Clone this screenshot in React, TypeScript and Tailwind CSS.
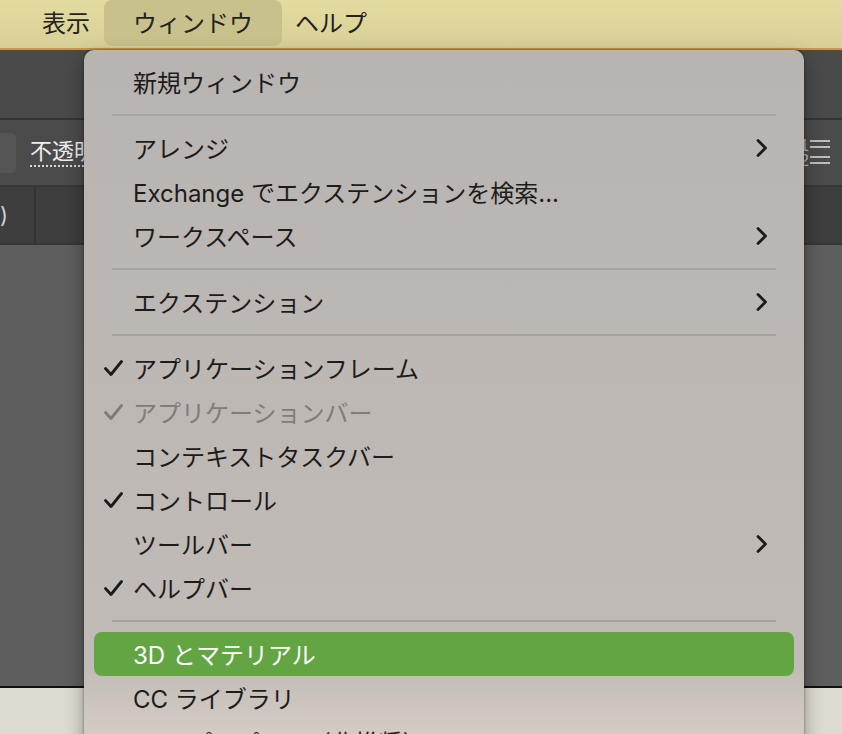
import React from "react";

const Check = ({ gray }: { gray?: boolean }) => (
  <svg width="20" height="20" viewBox="0 0 20 20" className="block">
    <path
      d="M2.5 10.5 L8 16.5 L18.5 3.5"
      fill="none"
      stroke={gray ? "#7f7b78" : "#1b1b1b"}
      strokeWidth="2.8"
      strokeLinecap="round"
      strokeLinejoin="round"
    />
  </svg>
);

const Chevron = () => (
  <svg width="14" height="20" viewBox="0 0 14 20" className="block">
    <path
      d="M3 2.5 L10.5 10 L3 17.5"
      fill="none"
      stroke="#1b1b1b"
      strokeWidth="2.8"
      strokeLinecap="round"
      strokeLinejoin="round"
    />
  </svg>
);

type Item = {
  label?: string;
  check?: boolean;
  gray?: boolean;
  sub?: boolean;
  active?: boolean;
  sep?: boolean;
};

const items: Item[] = [
  { label: "新規ウィンドウ" },
  { sep: true },
  { label: "アレンジ", sub: true },
  { label: "Exchange でエクステンションを検索..." },
  { label: "ワークスペース", sub: true },
  { sep: true },
  { label: "エクステンション", sub: true },
  { sep: true },
  { label: "アプリケーションフレーム", check: true },
  { label: "アプリケーションバー", check: true, gray: true },
  { label: "コンテキストタスクバー" },
  { label: "コントロール", check: true },
  { label: "ツールバー", sub: true },
  { label: "ヘルプバー", check: true },
  { sep: true },
  { label: "3D とマテリアル", active: true },
  { label: "CC ライブラリ" },
  { label: "CSS プロパティ（非推奨）" },
];

export default function App() {
  return (
    <div className="relative h-[734px] w-[842px] overflow-hidden font-['Inter','Noto_Sans_CJK_JP',sans-serif]">
      {/* Menu bar */}
      <div className="flex h-[50px] items-start border-b-2 border-[#c99a46] bg-gradient-to-b from-[#e4dba0] to-[#d9d097] text-[24px] leading-none text-[#222]">
        <div className="flex h-[46px] items-center pl-[42px] pr-[14px] pt-[2px]">表示</div>
        <div className="flex h-[46px] w-[178px] items-center rounded-[8px] bg-[#c8c18b] pl-[29px] pt-[2px]">
          ウィンドウ
        </div>
        <div className="flex h-[46px] items-center pl-[13px] pt-[2px]">ヘルプ</div>
      </div>

      {/* App background */}
      <div className="flex h-[638px] flex-col">
        <div className="h-[68px] bg-[#4a4a4a]" />
        <div className="h-[2px] bg-[#353535]" />
        <div className="flex h-[65px] items-center justify-between bg-[#4b4b4b]">
          <div className="flex items-center">
            <div className="h-[40px] w-[16px] rounded-r-[5px] bg-[#555555]" />
            <span className="ml-[14px] border-b-2 border-dotted border-[#d8d8d8] pb-[1px] text-[22px] leading-[26px] text-[#eeeeee]">
              不透明
            </span>
          </div>
          <svg width="36" height="30" viewBox="0 0 36 30" className="mr-[6px] block">
            <text x="0" y="13" fill="#bdbdbd" fontSize="16" fontFamily="Liberation Sans, sans-serif">1</text>
            <text x="0" y="28" fill="#bdbdbd" fontSize="16" fontFamily="Liberation Sans, sans-serif">2</text>
            <rect x="10" y="2" width="20" height="2" fill="#bdbdbd" />
            <rect x="10" y="8" width="20" height="2" fill="#bdbdbd" />
            <rect x="10" y="18" width="20" height="2" fill="#bdbdbd" />
            <rect x="10" y="24" width="20" height="2" fill="#bdbdbd" />
          </svg>
        </div>
        <div className="h-[2px] bg-[#383838]" />
        <div className="flex h-[56px] bg-[#3e3e3e]">
          <div className="flex w-[34px] items-center text-[22px] leading-none text-[#cfcfcf]">)</div>
          <div className="w-[2px] bg-[#333333]" />
        </div>
        <div className="h-[2px] bg-[#363636]" />
        <div className="flex-1 bg-[#5e5e5e]" />
        <div className="h-[2px] bg-[#111111]" />
      </div>
      <div className="h-[46px] bg-[#dedcd0]" />

      {/* Dropdown menu */}
      <div className="absolute left-[84px] top-[50px] h-[700px] w-[720px] rounded-t-[10px] bg-[linear-gradient(to_bottom,#b8b4b1_0%,#bdb8b4_50%,#c0bbb7_88%,#cbc4bd_93%,#d8d0c6_100%)] pt-[10px] shadow-[0_0_3px_rgba(0,0,0,0.45),0_8px_20px_rgba(0,0,0,0.35)]">
        {items.map((it, i) =>
          it.sep ? (
            <div key={i} className="flex h-[22px] items-center px-[28px]">
              <div className="h-[2px] w-full bg-[#a6a29e]" />
            </div>
          ) : (
            <div
              key={i}
              className={`mx-[10px] flex h-[44px] items-center rounded-[8px] pl-[9px] pr-[25px] text-[24px] leading-none ${
                it.active ? "bg-[#63a443] text-white" : it.gray ? "text-[#807c79]" : "text-[#1c1c1c]"
              }`}
            >
              <div className="flex w-[30px] items-center">{it.check ? <Check gray={it.gray} /> : null}</div>
              <div className="flex-1 whitespace-nowrap pt-[3px]">{it.label}</div>
              {it.sub ? <Chevron /> : null}
            </div>
          )
        )}
      </div>
    </div>
  );
}
